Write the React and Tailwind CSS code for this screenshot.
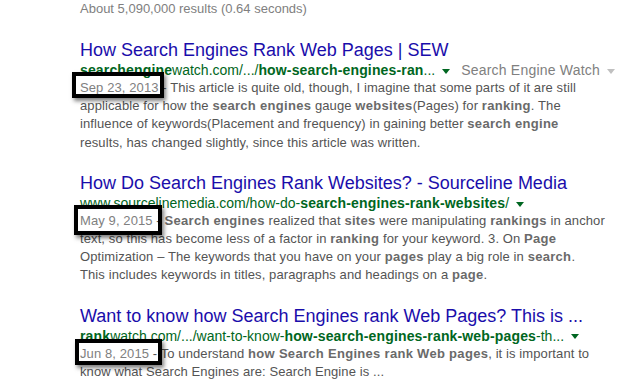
import React from 'react'

const results = [
  {
    title: 'How Search Engines Rank Web Pages | SEW',
    url: (
      <>
        <b>searchengine</b>watch.com/.../<b>how-search-engines-ran</b>...
      </>
    ),
    source: 'Search Engine Watch',
    date: 'Sep 23, 2013',
    box: 'left-[-8px] w-[92px] top-[-8px] bottom-[-3px]',
    lines: [
      <> - This article is quite old, though, I imagine that some parts of it are still</>,
      <>applicable for how the <em>search engines</em> gauge <em>websites</em>(Pages) for <em>ranking</em>. The</>,
      <>influence of keywords(Placement and frequency) in gaining better <em>search engine</em></>,
      <>results, has changed slightly, since this article was written.</>,
    ],
  },
  {
    title: 'How Do Search Engines Rank Websites? - Sourceline Media',
    url: (
      <>
        www.sourcelinemedia.com/how-do-<b>search-engines-rank-websites</b>/
      </>
    ),
    date: 'May 9, 2015',
    box: 'left-[-6px] w-[88px] top-[-8px] bottom-[-7px]',
    lines: [
      <> - <em>Search engines</em> realized that <em>sites</em> were manipulating <em>rankings</em> in anchor</>,
      <>text, so this has become less of a factor in <em>ranking</em> for your keyword. 3. On <em>Page</em></>,
      <>Optimization – The keywords that you have on your <em>pages</em> play a big role in <em>search</em>.</>,
      <>This includes keywords in titles, paragraphs and headings on a <em>page</em>.</>,
    ],
  },
  {
    title: 'Want to know how Search Engines rank Web Pages? This is ...',
    url: (
      <>
        <b>rank</b>watch.com/.../want-to-know-<b>how-search-engines-rank-web-pages</b>-th...
      </>
    ),
    date: 'Jun 8, 2015',
    box: 'left-[-5px] w-[87px] top-[-7px] bottom-[-4px]',
    lines: [
      <> - To understand <em>how Search Engines rank Web pages</em>, it is important to</>,
      <>know what Search Engines are: Search Engine is ...</>,
    ],
  },
]

function Arrow({ color }) {
  return (
    <span
      className={`inline-block align-middle ml-[7px] w-0 h-0 border-x-[4px] border-x-transparent border-t-[5px] ${color}`}
    />
  )
}

function Result({ r }) {
  return (
    <div className="flex flex-col">
      <a className="text-[18px] leading-[22px] text-[#1a0dab] whitespace-nowrap">{r.title}</a>
      <div className="text-[14px] leading-[18px] text-[#006621] whitespace-nowrap">
        <cite className="not-italic [&_b]:font-bold [&_b]:tracking-[0.15px]">{r.url}</cite>
        <Arrow color="border-t-[#006621]" />
        {r.source && (
          <>
            <span className="ml-[11px] text-[#808080] tracking-[0.2px]">{r.source}</span>
            <Arrow color="border-t-[#c0c0c0]" />
          </>
        )}
      </div>
      <div className="text-[13px] leading-[1.4] tracking-[0.1px] text-[#545454] [&_em]:not-italic [&_em]:font-bold [&_em]:tracking-[0.3px] [&_em]:text-[#6a6a6a]">
        {r.lines.map((line, i) => (
          <div key={i} className="whitespace-nowrap">
            {i === 0 && (
              <span className="relative text-[#808080]">
                {r.date}
                <span
                  className={`absolute ${r.box} border-[4px] border-black shadow-[2px_3px_4px_rgba(0,0,0,0.5)]`}
                />
              </span>
            )}
            {line}
          </div>
        ))}
      </div>
    </div>
  )
}

export default function App() {
  return (
    <div className="w-[633px] h-[385px] overflow-hidden bg-white pl-20 font-['Liberation_Sans',Arial,sans-serif]">
      <div className="text-[13px] leading-[18px] text-[#808080] mb-[21px]">
        About 5,090,000 results (0.64 seconds)
      </div>
      <div className="flex flex-col gap-5">
        {results.map((r, i) => (
          <Result key={i} r={r} />
        ))}
      </div>
    </div>
  )
}
